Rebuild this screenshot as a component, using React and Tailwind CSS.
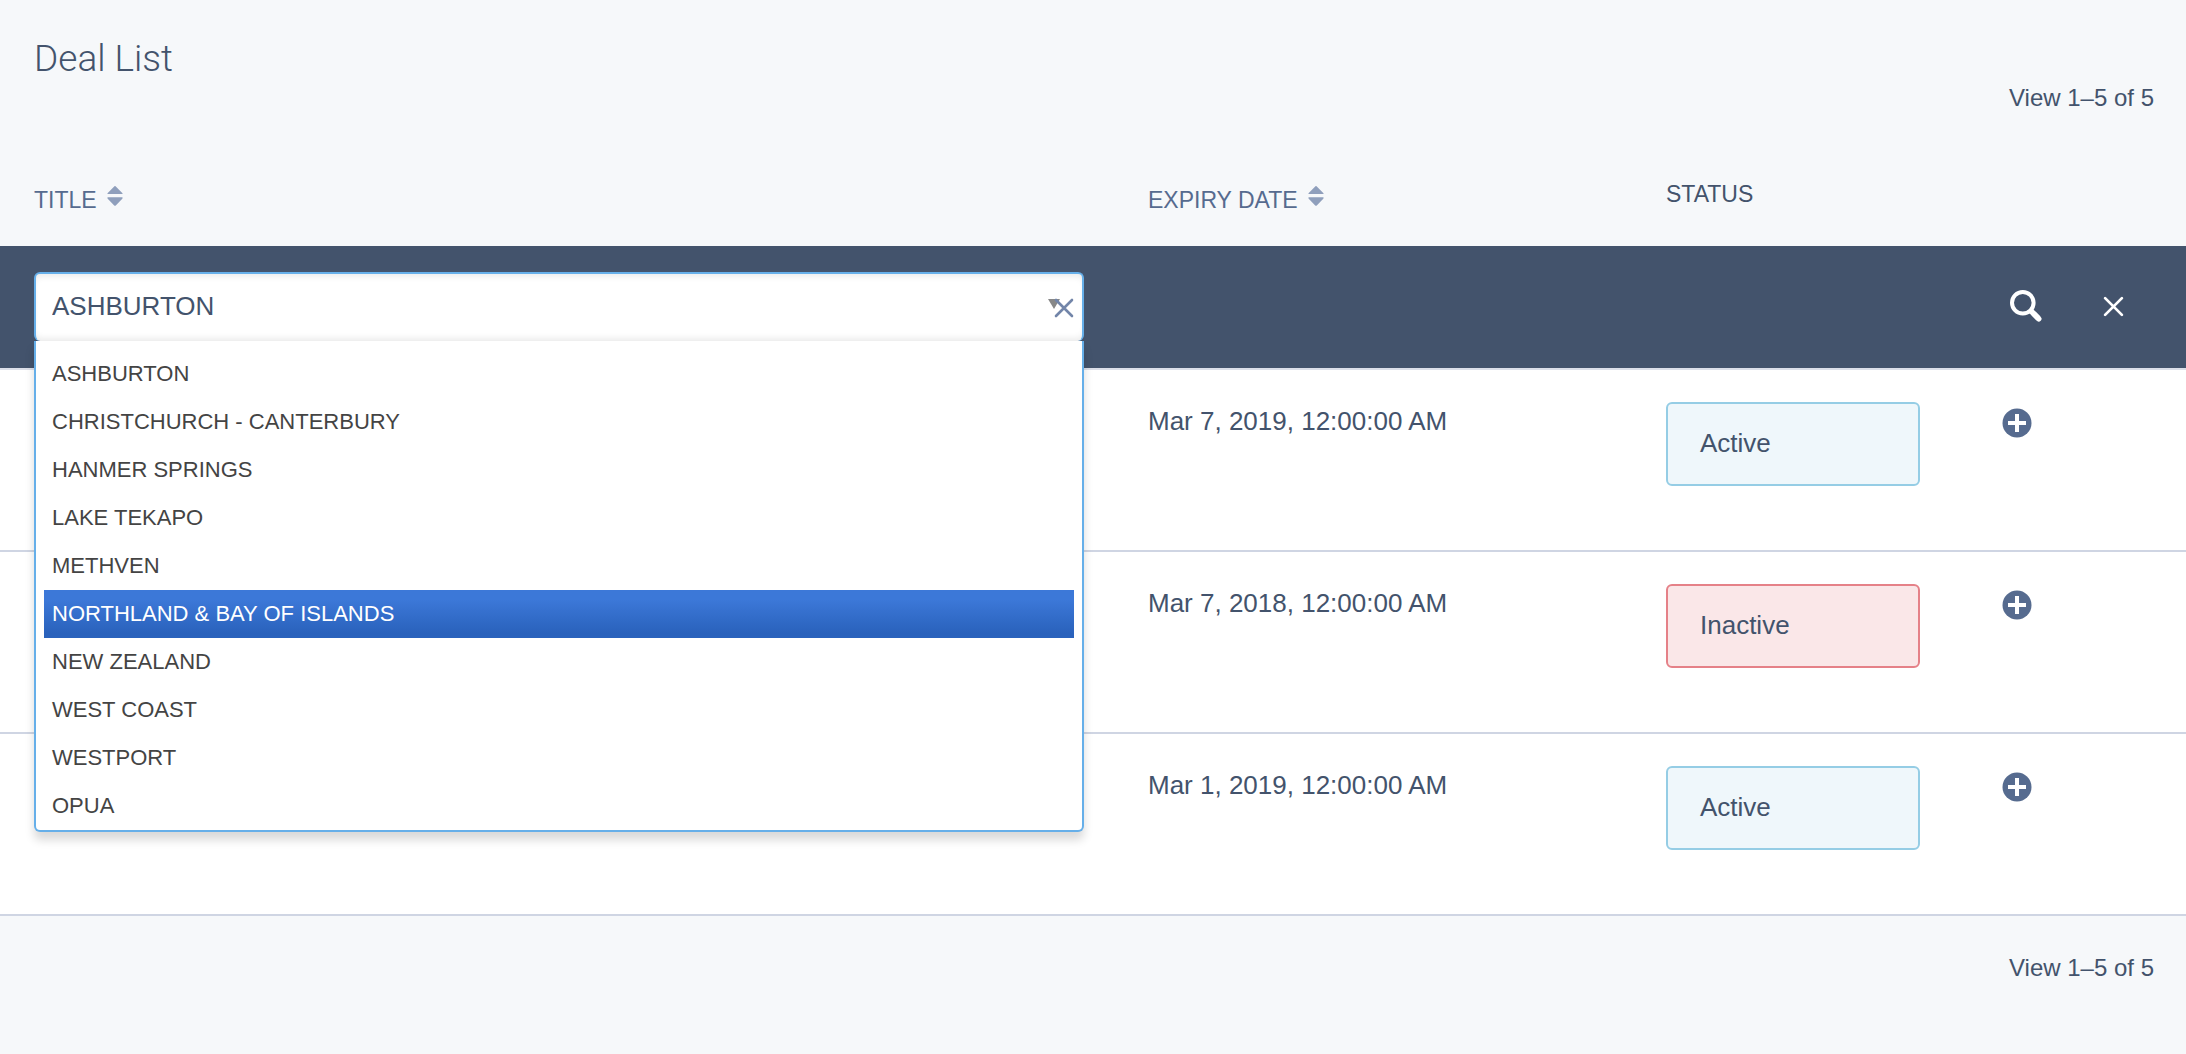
import React, { useState } from "react";

const REGIONS = [
  "ASHBURTON",
  "CHRISTCHURCH - CANTERBURY",
  "HANMER SPRINGS",
  "LAKE TEKAPO",
  "METHVEN",
  "NORTHLAND & BAY OF ISLANDS",
  "NEW ZEALAND",
  "WEST COAST",
  "WESTPORT",
  "OPUA",
];

const DEALS = [
  { expiry: "Mar 7, 2019, 12:00:00 AM", status: "Active" },
  { expiry: "Mar 7, 2018, 12:00:00 AM", status: "Inactive" },
  { expiry: "Mar 1, 2019, 12:00:00 AM", status: "Active" },
];

function SortIcon() {
  return (
    <svg className="h-5 w-4 fill-[#8f9fbc]" viewBox="0 0 16 20" aria-hidden="true">
      <path d="M7.2.4a1.1 1.1 0 0 1 1.6 0l6.7 6.8v.9H.5v-.9zM.5 11.2h15v1.2l-6.7 7a1.1 1.1 0 0 1-1.6 0l-6.7-7z" />
    </svg>
  );
}

function CloseIcon({ className }) {
  return (
    <svg className={className} viewBox="0 0 20 20" fill="none" stroke="currentColor" strokeWidth="2.6" strokeLinecap="round" aria-hidden="true">
      <path d="M2 2l16 16M18 2L2 18" />
    </svg>
  );
}

function SearchIcon() {
  return (
    <svg className="size-8" viewBox="0 0 32 32" fill="none" stroke="currentColor" aria-hidden="true">
      <circle cx="12.8" cy="12.8" r="10.8" strokeWidth="4" />
      <path d="M20.5 20.5l8 8" strokeWidth="5.4" />
      <path d="M24 24l4.8 4.8" strokeWidth="5.4" strokeLinecap="round" />
    </svg>
  );
}

function PlusCircleIcon() {
  return (
    <svg className="size-[30px]" viewBox="0 0 30 30" aria-hidden="true">
      <circle cx="15" cy="15" r="14.5" fill="#566b8f" />
      <path d="M15 6v18M6 15h18" stroke="#fff" strokeWidth="4" />
    </svg>
  );
}

function SortHeader({ label, className }) {
  return (
    <th scope="col" className={className}>
      <button type="button" className="mt-[6px] flex items-start gap-2.5 text-[#566b8f]">
        {label}
        <SortIcon />
      </button>
    </th>
  );
}

function RegionFilter() {
  const [value, setValue] = useState("ASHBURTON");
  return (
    <div className="relative">
      <select
        aria-label="Title"
        value={value}
        onChange={(e) => setValue(e.target.value)}
        className="block h-[69px] w-full appearance-none rounded-md border-2 border-b-0 border-[#66afe9] bg-white pb-0.5 pl-4 text-[26px] text-[#43536c] shadow-[inset_0_6px_6px_-3px_rgba(0,0,0,0.08),inset_0_-6px_6px_-3px_rgba(0,0,0,0.08)] outline-none"
      >
        {REGIONS.map((r) => (
          <option key={r}>{r}</option>
        ))}
      </select>
      <svg className="pointer-events-none absolute top-[27px] right-6 h-2.5 w-3" viewBox="0 0 12 10" aria-hidden="true">
        <path d="M0 0h12L6 10z" fill="#888" />
      </svg>
      <button type="button" aria-label="Clear title" className="absolute top-[26px] right-2.5 text-[#7285a9]">
        <CloseIcon className="size-5" />
      </button>
      <ul
        role="listbox"
        aria-label="Title options"
        className="absolute top-full left-0 z-10 w-full rounded-b-md border-2 border-t-0 border-[#66afe9] bg-white px-2 pt-[9px] text-[22px] leading-[48px] text-[#444] shadow-[0_8px_10px_rgba(0,0,0,0.15)]"
      >
        {REGIONS.map((r) => (
          <li
            key={r}
            role="option"
            aria-selected={r === value}
            onClick={() => setValue(r)}
            className={
              r === "NORTHLAND & BAY OF ISLANDS"
                ? "bg-linear-to-b from-[#3c78d8] from-20% to-[#2a62bc] to-90% pl-2 text-white"
                : "pl-2"
            }
          >
            {r}
          </li>
        ))}
      </ul>
    </div>
  );
}

function StatusBox({ status }) {
  return (
    <div
      className={
        status === "Active"
          ? "rounded-md border-2 border-[#95cde5] bg-[#eff7fb] px-8 pt-5 pb-[22px]"
          : "rounded-md border-2 border-[#e58188] bg-[#fae7e8] px-8 pt-5 pb-[22px]"
      }
    >
      {status}
    </div>
  );
}

export default function App() {
  return (
    <main className="min-h-screen bg-[#f6f8fa] font-['Liberation_Sans',Arial,sans-serif] text-[#43536c]">
      <header className="pt-9 pr-8 pl-[34px]">
        <h1 className="font-['Roboto','Liberation_Sans',sans-serif] text-[37px] leading-[46px] font-light">Deal List</h1>
        <p className="text-right text-2xl">View 1–5 of 5</p>
      </header>
      <table className="mt-8 w-full table-fixed border-separate border-spacing-0 text-left">
        <colgroup>
          <col />
          <col className="w-[518px]" />
          <col className="w-[318px]" />
          <col className="w-[234px]" />
        </colgroup>
        <thead>
          <tr className="h-[100px] align-top text-[23px] leading-[28px]">
            <SortHeader label="TITLE" className="pt-[34px] pl-[34px] font-normal" />
            <SortHeader label="EXPIRY DATE" className="pt-[34px] pl-8 font-normal" />
            <th scope="col" className="pt-[34px] pl-8 font-normal">STATUS</th>
            <td />
          </tr>
          <tr className="bg-[#43536c] align-top">
            <td className="h-[124px] border-b-2 border-[#dcdfe9] pt-[26px] pr-8 pl-[34px]">
              <RegionFilter />
            </td>
            <td className="border-b-2 border-[#dcdfe9]" />
            <td className="border-b-2 border-[#dcdfe9]" />
            <td className="border-b-2 border-[#dcdfe9] pt-11 pl-[58px]">
              <div className="flex items-center gap-[61px] text-white">
                <button type="button" aria-label="Search">
                  <SearchIcon />
                </button>
                <button type="button" aria-label="Cancel filter">
                  <CloseIcon className="size-[21px]" />
                </button>
              </div>
            </td>
          </tr>
        </thead>
        <tbody className="bg-white text-[26px] leading-[38px]">
          {DEALS.map((deal, i) => (
            <tr key={i} className="align-top">
              <td className="h-[182px] border-b-2 border-[#cfd5e3]" />
              <td className="border-b-2 border-[#cfd5e3] pt-8 pl-8">{deal.expiry}</td>
              <td className="border-b-2 border-[#cfd5e3] px-8 pt-8">
                <StatusBox status={deal.status} />
              </td>
              <td className="border-b-2 border-[#cfd5e3] pt-[38px] pl-[50px]">
                <button type="button" aria-label="Add" className="block">
                  <PlusCircleIcon />
                </button>
              </td>
            </tr>
          ))}
        </tbody>
      </table>
      <footer className="pt-9 pr-8 text-right text-2xl">View 1–5 of 5</footer>
    </main>
  );
}
